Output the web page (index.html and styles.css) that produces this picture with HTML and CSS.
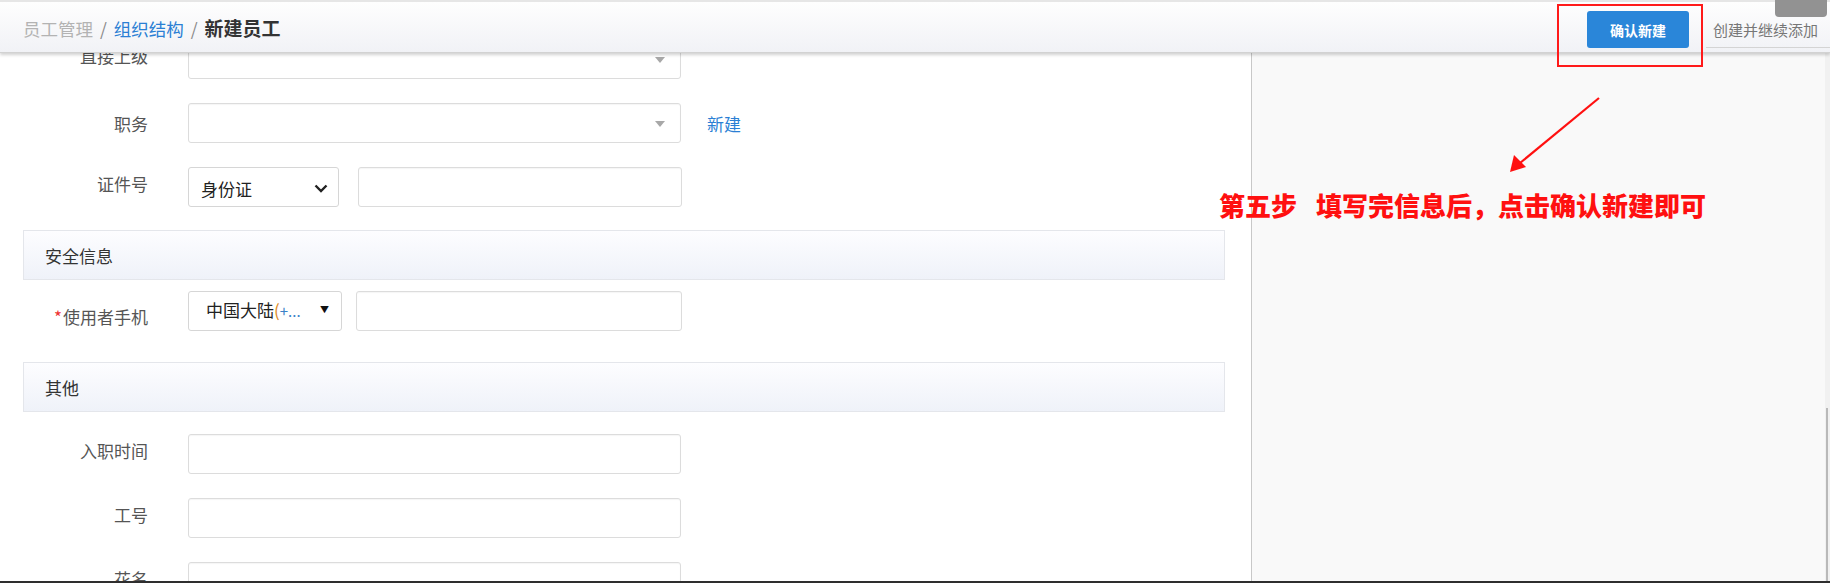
FILE: index.html
```html
<!DOCTYPE html>
<html lang="zh-CN">
<head>
    <meta charset="UTF-8">
    <meta name="viewport" content="width=device-width, initial-scale=1.0">
    <title>新建员工</title>
    <link rel="stylesheet" href="styles.css">
</head>
<body>
    <div class="page">
        <div class="main">
            <div class="form-area">
                <div class="row">
                    <label class="row-label">直接上级</label>
                    <div class="field field-select"><span class="caret"></span></div>
                </div>
                <div class="row row-job">
                    <label class="row-label">职务</label>
                    <div class="field field-select"><span class="caret"></span></div>
                    <a class="row-link" href="#">新建</a>
                </div>
                <div class="row">
                    <label class="row-label">证件号</label>
                    <div class="pick pick-id">
                        <span>身份证</span>
                        <svg class="chevron" width="14" height="9" viewBox="0 0 14 9"><path d="M1.5 1.5 L7 7 L12.5 1.5" fill="none" stroke="#222" stroke-width="2.4"/></svg>
                    </div>
                    <div class="field field-id"></div>
                </div>

                <div class="section">安全信息</div>
                <div class="row row-phone">
                    <label class="row-label"><span class="req">*</span>使用者手机</label>
                    <div class="pick pick-phone">
                        <span>中国大陆<span class="paren">(</span><span class="plus">+...</span></span>
                        <span class="tri">▼</span>
                    </div>
                    <div class="field field-phone"></div>
                </div>

                <div class="section section-other">其他</div>
                <div class="row">
                    <label class="row-label">入职时间</label>
                    <div class="field"></div>
                </div>
                <div class="row">
                    <label class="row-label">工号</label>
                    <div class="field"></div>
                </div>
                <div class="row">
                    <label class="row-label">花名</label>
                    <div class="field"></div>
                </div>
            </div>
            <div class="side"></div>
        </div>

        <div class="topbar">
            <div class="crumbs">
                <span class="crumb-muted">员工管理</span>
                <span class="crumb-sep">/</span>
                <a class="crumb-link" href="#">组织结构</a>
                <span class="crumb-sep">/</span>
                <strong class="crumb-current">新建员工</strong>
            </div>
            <div class="actions">
                <button class="btn-primary">确认新建</button>
                <button class="btn-plain">创建并继续添加</button>
            </div>
        </div>
        <div class="corner-tab"></div>

        <!-- tutorial annotation drawn over the page -->
        <div class="mark-box"></div>
        <svg class="mark-arrow" width="1830" height="583" viewBox="0 0 1830 583">
            <line x1="1599" y1="98" x2="1520" y2="163" stroke="#ff1010" stroke-width="2.2"/>
            <polygon points="1510,172 1514,155 1526,167" fill="#ff1010"/>
        </svg>
        <div class="mark-text">
            <span>第五步</span>
            <span>填写完信息后，点击确认新建即可</span>
        </div>
    </div>
</body>
</html>
```

FILE: styles.css
```css
body {
    margin: 0;
    font-family: "Noto Sans CJK SC", "Noto Sans", sans-serif;
    background-color: #fff;
    overflow: hidden;
}
.page {
    position: relative;
    width: 1830px;
    height: 581px;
    overflow: hidden;
    border-bottom: 2px solid #2e2e2e;
}
.main {
    display: flex;
    height: 100%;
}
.form-area {
    width: 1228px;
    padding: 39px 0 0 23px;
    border-right: 1px solid #c8c8c8;
    flex-shrink: 0;
}
.side {
    position: relative;
    flex: 1;
    background-color: #f9f9f9;
    border-right: 5px solid #f1f1f1;
}
.side::after {
    content: "";
    position: absolute;
    right: -3px;
    top: 408px;
    bottom: 0;
    width: 2px;
    background-color: #b9b9b9;
}

/* form rows */
.row {
    display: flex;
    align-items: center;
    height: 40px;
    margin-bottom: 24px;
}
.row-label {
    width: 125px;
    margin-right: 40px;
    padding-bottom: 8px;
    text-align: right;
    font-size: 17px;
    color: #555;
}
.row-job .row-label {
    padding-bottom: 0;
}
.req {
    color: #e33;
    margin-right: 1px;
}
.row-phone .row-label {
    padding-top: 10px;
    padding-bottom: 0;
}
.field {
    position: relative;
    box-sizing: border-box;
    width: 493px;
    height: 40px;
    border: 1px solid #dcdcdc;
    border-radius: 3px;
    box-shadow: inset 0 1px 1px rgba(0, 0, 0, 0.04);
    background-color: #fff;
}
.caret {
    position: absolute;
    right: 15px;
    top: 17px;
    border-left: 5px solid transparent;
    border-right: 5px solid transparent;
    border-top: 6px solid #a8a8a8;
}
.row-link {
    margin-left: 26px;
    font-size: 17px;
    color: #2b7fd4;
    text-decoration: none;
}
.pick {
    display: flex;
    align-items: center;
    justify-content: space-between;
    box-sizing: border-box;
    height: 40px;
    border: 1px solid #d6d6d6;
    border-radius: 3px;
    background-color: #fff;
    font-size: 17px;
    color: #222;
}
.pick-id {
    width: 151px;
    padding: 2px 10px 0 12px;
    margin-right: 19px;
}
.field-id {
    width: 324px;
}
.pick-phone {
    width: 154px;
    padding: 0 12px 4px 17px;
    margin-right: 14px;
}
.paren {
    color: #e08a1e;
}
.plus {
    color: #3b82c8;
    font-size: 15px;
}
.tri {
    font-size: 9px;
    color: #111;
}
.field-phone {
    width: 326px;
}

/* section headers */
.section {
    box-sizing: border-box;
    width: 1202px;
    height: 50px;
    margin: -1px 0 11px;
    padding-left: 21px;
    display: flex;
    align-items: center;
    font-size: 17px;
    color: #333;
    border: 1px solid #e4e6eb;
    background: linear-gradient(#fdfdff, #eff2f9);
}
.section-other {
    margin: 31px 0 22px;
}

/* fixed bar over the scrolled form */
.topbar {
    position: absolute;
    left: 0;
    top: 0;
    right: 0;
    height: 50px;
    display: flex;
    align-items: center;
    justify-content: space-between;
    border-top: 2px solid #e6e6e6;
    border-bottom: 1px solid #d2d2d2;
    background: linear-gradient(#fefefe, #f1f2f6);
    box-shadow: 0 2px 3px rgba(0, 0, 0, 0.18);
}
.crumbs {
    padding-left: 23px;
    font-size: 17.5px;
}
.crumb-muted {
    color: #b3b3b3;
}
.crumb-sep {
    color: #8a8a8a;
    margin: 0 3px;
}
.crumb-link {
    color: #2b7fd4;
    text-decoration: none;
}
.crumb-current {
    color: #333;
    font-size: 19px;
}
.actions {
    display: flex;
    align-items: flex-start;
    align-self: flex-start;
    padding-top: 9px;
}
.btn-primary {
    width: 102px;
    height: 37px;
    border: none;
    border-radius: 3px;
    background-color: #2a86d9;
    color: #fff;
    font-family: inherit;
    font-size: 14px;
    font-weight: bold;
    margin-right: 17px;
}
.btn-plain {
    height: 37px;
    padding: 0 12px 0 7px;
    border: none;
    border-bottom: 1px solid #d4d4d4;
    background: transparent;
    color: #777;
    font-family: inherit;
    font-size: 15px;
}
.corner-tab {
    position: absolute;
    left: 1775px;
    top: 0;
    width: 52px;
    height: 17px;
    border-radius: 0 0 4px 4px;
    background-color: #929292;
}

/* red annotation */
.mark-box {
    position: absolute;
    left: 1557px;
    top: 4px;
    width: 142px;
    height: 59px;
    border: 2px solid #ff1a1a;
}
.mark-arrow {
    position: absolute;
    left: 0;
    top: 0;
}
.mark-text {
    position: absolute;
    left: 1219px;
    top: 188px;
    display: flex;
    gap: 19px;
    font-size: 26px;
    font-weight: 900;
    color: #ff1010;
    line-height: 34px;
}
```
